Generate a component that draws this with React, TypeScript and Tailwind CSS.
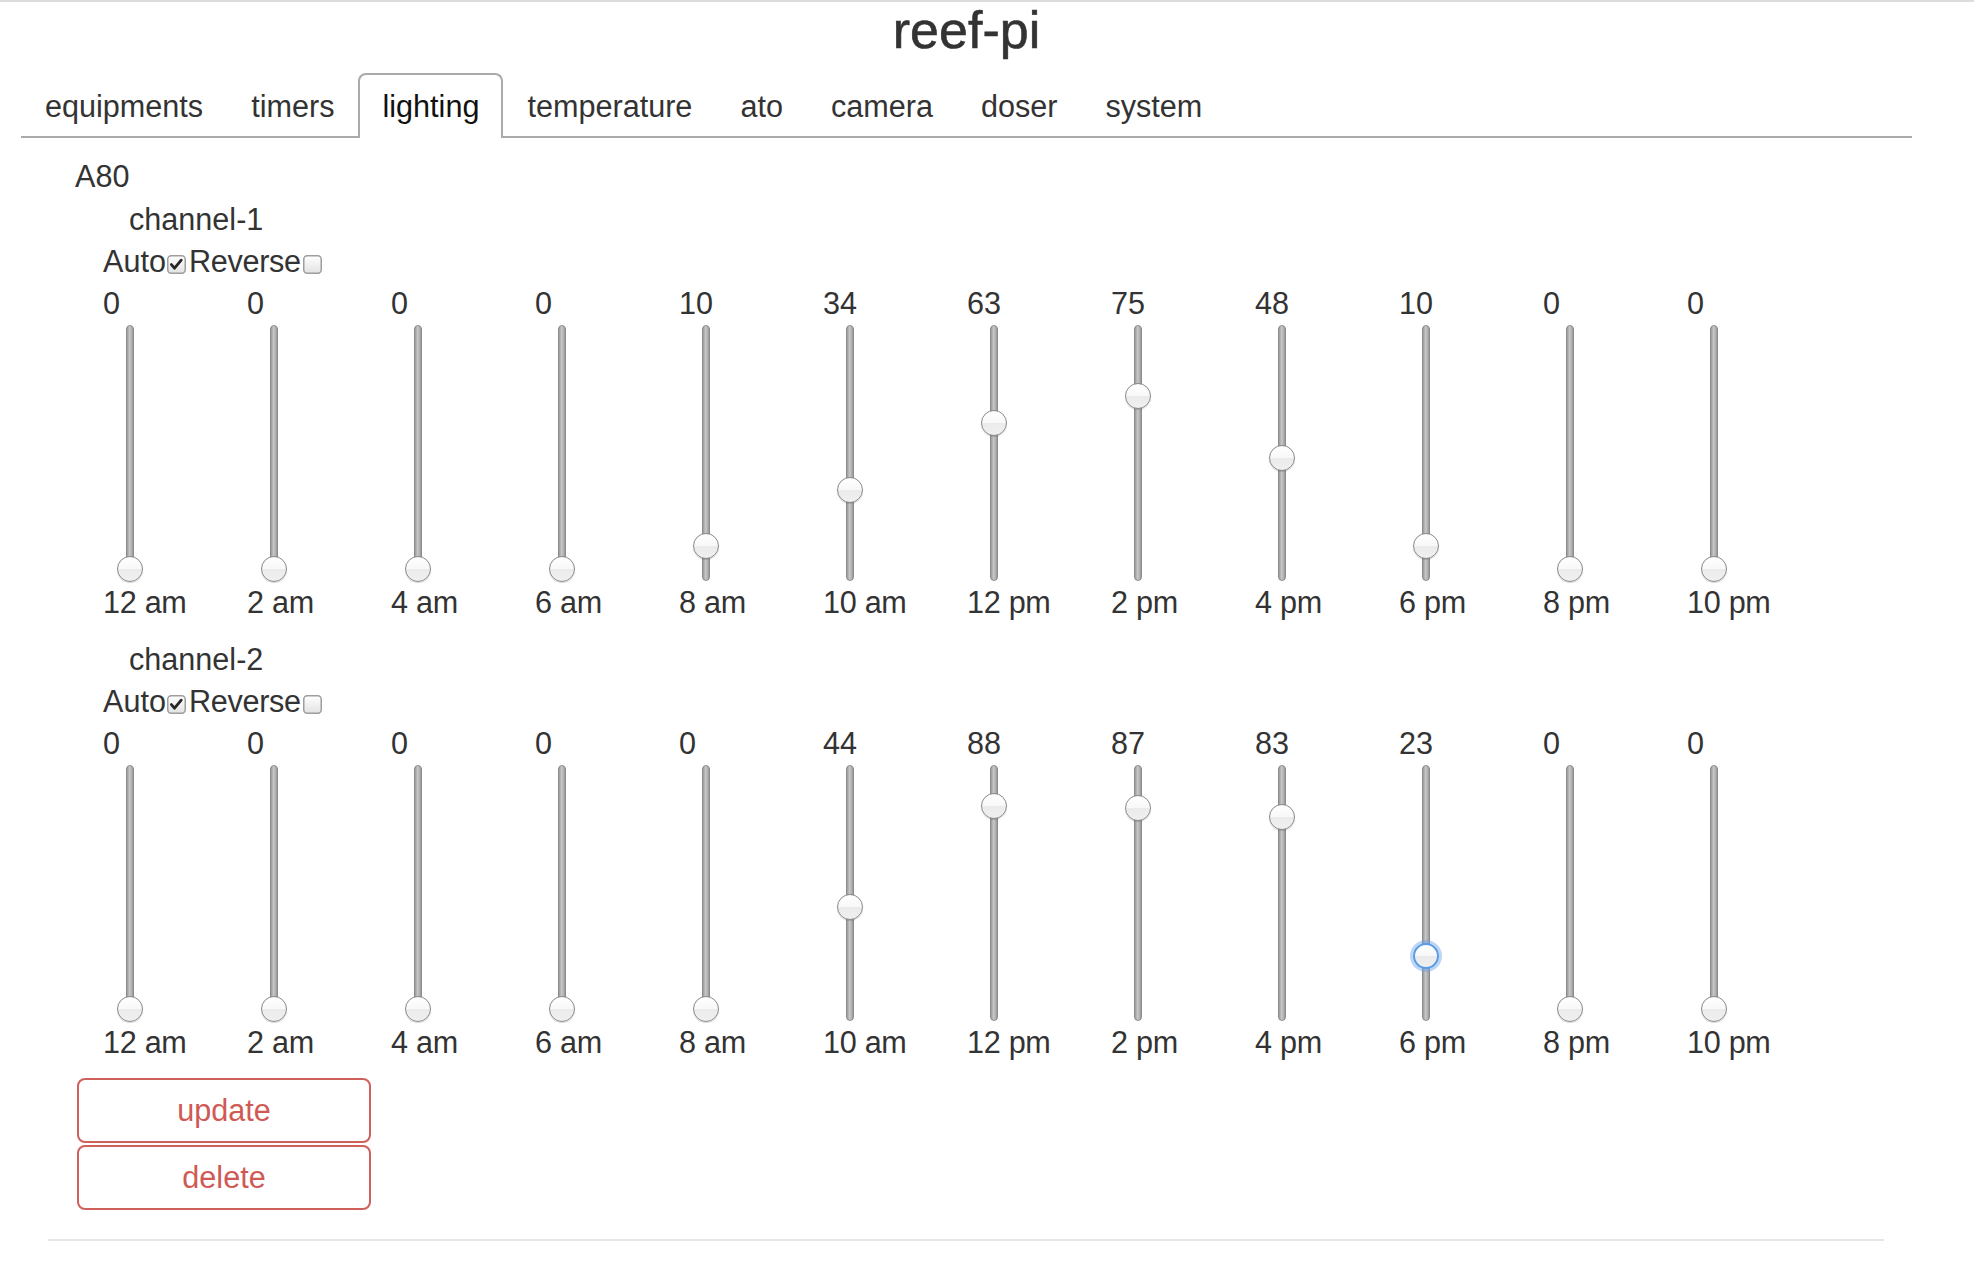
import React from "react";

const ch1 = [0, 0, 0, 0, 10, 34, 63, 75, 48, 10, 0, 0];
const ch2 = [0, 0, 0, 0, 0, 44, 88, 87, 83, 23, 0, 0];
const times = ["12 am", "2 am", "4 am", "6 am", "8 am", "10 am", "12 pm", "2 pm", "4 pm", "6 pm", "8 pm", "10 pm"];
const tabs = ["equipments", "timers", "lighting", "temperature", "ato", "camera", "doser", "system"];

function CheckBox({ checked }: { checked: boolean }) {
  return (
    <svg width="19" height="19" viewBox="0 0 19 19" className="mt-[14px] shrink-0">
      <defs>
        <linearGradient id={checked ? "cbg1" : "cbg2"} x1="0" y1="0" x2="0" y2="1">
          <stop offset="0" stopColor="#ffffff" />
          <stop offset="1" stopColor="#e2e2e2" />
        </linearGradient>
      </defs>
      <rect x="0.75" y="0.75" width="17.5" height="17.5" rx="3.5" fill={`url(#${checked ? "cbg1" : "cbg2"})`} stroke="#9e9e9e" strokeWidth="1.5" />
      {checked && (
        <path d="M4.4 9.6 L7.6 13.2 L14.2 5.2" fill="none" stroke="#262626" strokeWidth="2.8" strokeLinecap="round" strokeLinejoin="round" />
      )}
    </svg>
  );
}

function Slider({ value, focused }: { value: number; focused?: boolean }) {
  const top = 231 - value * 2.31;
  return (
    <div className="relative h-[256px] w-[144px]">
      <div className="ml-[23px] h-[256px] w-[8px] rounded-full border border-[#8c8c8c] bg-[linear-gradient(to_right,#9a9a9a,#c9c9c9_45%,#b5b5b5_70%,#9a9a9a)]" />
      <div
        className={
          focused
            ? "absolute left-[14px] h-[26px] w-[26px] rounded-full border-[2.5px] border-[#5a9be8] bg-[linear-gradient(to_bottom,#ffffff,#f7f7f7_50%,#eaeaea_52%,#f0f0f0)] shadow-[0_0_0_3px_rgba(110,165,235,0.45)]"
            : "absolute left-[14px] h-[26px] w-[26px] rounded-full border-[1.5px] border-[#8a8a8a] bg-[linear-gradient(to_bottom,#ffffff,#f8f8f8_50%,#ebebeb_52%,#f0f0f0)] shadow-[0_1px_1px_rgba(0,0,0,0.15)]"
        }
        style={{ top: `${top}px` }}
      />
    </div>
  );
}

function Channel({ name, values, focusIndex }: { name: string; values: number[]; focusIndex?: number }) {
  return (
    <div className="mb-[14px]">
      <div className="ml-[54px] h-[43px] leading-[43px]">{name}</div>
      <div className="ml-[28px] flex h-[41px] items-start leading-[41px]">
        <span>Auto</span>
        <span className="ml-[1px] mr-[3px] flex">
          <CheckBox checked={true} />
        </span>
        <span className="tracking-[-0.3px]">Reverse</span>
        <span className="ml-[2px] flex">
          <CheckBox checked={false} />
        </span>
      </div>
      <div className="ml-[28px] flex">
        {values.map((v, i) => (
          <div key={i} className="flex w-[144px] flex-col">
            <div className="h-[43px] leading-[43px]">{v}</div>
            <Slider value={v} focused={i === focusIndex} />
            <div className="h-[43px] leading-[43px] tracking-[-0.3px]">{times[i]}</div>
          </div>
        ))}
      </div>
    </div>
  );
}

export default function App() {
  return (
    <div className="min-h-[1268px] w-full bg-white text-[30.6px] text-[#333333] [font-family:'Liberation_Sans',Arial,sans-serif]">
      <div className="h-[2px] w-full bg-[#dcdcdc]" />
      <div className="ml-[21px] w-[1891px]">
        <div className="h-[56px] text-center text-[52px] leading-[56px] text-[#333333] [-webkit-text-stroke:0.6px_#333333]">reef-pi</div>
        <div className="mt-[15px] flex border-b-2 border-[#aaaaaa]">
          {tabs.map((t) => (
            <div
              key={t}
              className={
                t === "lighting"
                  ? "-mb-[2px] rounded-t-[8px] border-2 border-b-0 border-[#aaaaaa] bg-white px-[22px] pb-[9px] pt-[9px] leading-[45px] text-[#111111]"
                  : "-mb-[2px] rounded-t-[8px] border-2 border-b-0 border-transparent px-[22px] pb-[9px] pt-[9px] leading-[45px] text-[#333333]"
              }
            >
              {t}
            </div>
          ))}
        </div>
        <div className="mt-[17px] pl-[54px]">
          <div className="h-[43px] leading-[43px]">A80</div>
          <Channel name="channel-1" values={ch1} />
          <Channel name="channel-2" values={ch2} focusIndex={9} />
          <div className="ml-[2px] flex w-[294px] flex-col gap-[2px]">
            <button className="flex h-[65px] w-[294px] items-center justify-center rounded-[8px] border-2 border-[#d0605b] bg-white text-[#cf5a55]">
              update
            </button>
            <button className="flex h-[65px] w-[294px] items-center justify-center rounded-[8px] border-2 border-[#d0605b] bg-white text-[#cf5a55]">
              delete
            </button>
          </div>
        </div>
        <div className="ml-[27px] mt-[29px] h-[2px] w-[1836px] bg-[#e6e6e6]" />
      </div>
    </div>
  );
}
